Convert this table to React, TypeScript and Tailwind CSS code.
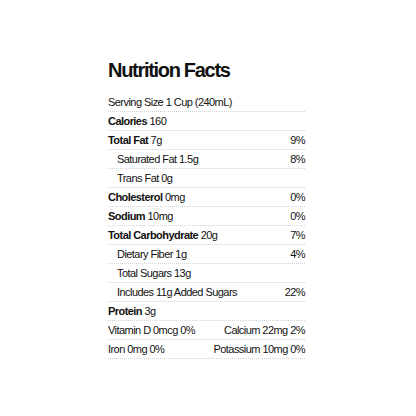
type Row = {
  label: string;
  amount?: string;
  dv?: string;
  bold?: boolean;
  indent?: boolean;
};

const rows: Row[] = [
  { label: "Calories", amount: "160", bold: true },
  { label: "Total Fat", amount: "7g", dv: "9%", bold: true },
  { label: "Saturated Fat", amount: "1.5g", dv: "8%", indent: true },
  { label: "Trans Fat", amount: "0g", indent: true },
  { label: "Cholesterol", amount: "0mg", dv: "0%", bold: true },
  { label: "Sodium", amount: "10mg", dv: "0%", bold: true },
  { label: "Total Carbohydrate", amount: "20g", dv: "7%", bold: true },
  { label: "Dietary Fiber", amount: "1g", dv: "4%", indent: true },
  { label: "Total Sugars", amount: "13g", indent: true },
  { label: "Includes 11g Added Sugars", dv: "22%", indent: true },
  { label: "Protein", amount: "3g", bold: true },
];

const line = "border-b border-dotted border-[#d4d4d4]";

export default function App() {
  return (
    <div
      className="w-[416px] h-[416px] bg-white text-[#111] pt-[57px] pl-[108px]"
      style={{ fontFamily: '"Liberation Sans", Arial, sans-serif' }}
    >
      <div className="w-[197px]">
        <h1 className="text-[20px] font-bold leading-[26px] tracking-[-1.3px] mb-[10px]">
          Nutrition Facts
        </h1>
        <div className="text-[11px] tracking-[-0.55px]">
          <div className={`h-[19px] flex items-center ${line}`}>
            Serving Size 1 Cup (240mL)
          </div>
          {rows.map((r) => (
            <div
              key={r.label}
              className={`h-[19px] flex items-center justify-between ${line} ${r.indent ? "pl-[9px]" : ""}`}
            >
              <span>
                {r.bold ? <span className="font-bold">{r.label}</span> : r.label}
                {r.amount ? ` ${r.amount}` : ""}
              </span>
              {r.dv && <span>{r.dv}</span>}
            </div>
          ))}
          <div className={`h-[19px] flex items-center justify-between ${line}`}>
            <span>Vitamin D 0mcg 0%</span>
            <span>Calcium 22mg 2%</span>
          </div>
          <div className={`h-[19px] flex items-center justify-between ${line}`}>
            <span>Iron 0mg 0%</span>
            <span>Potassium 10mg 0%</span>
          </div>
        </div>
      </div>
    </div>
  );
}
